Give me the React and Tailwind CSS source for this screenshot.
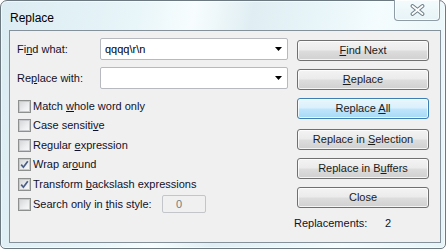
import React from 'react';

const btnBase =
  'h-[21px] w-[132px] flex items-center justify-center rounded-[3px] border text-[11px] leading-none text-[#1b1b1b] shadow-[inset_0_0_0_1px_rgba(255,255,255,0.75)]';
const btnGray =
  'border-[#707070] bg-[linear-gradient(180deg,#f3f3f3_0%,#ebebeb_48%,#dddddd_52%,#d0d0d0_100%)]';
const btnBlue =
  'border-[#3c7fb1] bg-[linear-gradient(180deg,#eaf6fd_0%,#d9f0fc_48%,#bee6fd_52%,#a7d9f5_100%)]';

function Check({ checked }) {
  return (
    <span className="w-[13px] h-[13px] shrink-0 border border-[#8e8f8f] bg-white flex items-center justify-center">
      <span className="w-[11px] h-[11px] border border-[#c8cacd] bg-[linear-gradient(135deg,#d6d8db_0%,#eceef0_60%,#f8f8f8_100%)] flex items-center justify-center">
        {checked && (
          <svg width="9" height="9" viewBox="0 0 9 9">
            <path d="M1.2 4.6 L3.4 7.2 L7.8 1.2" fill="none" stroke="#4a5e86" strokeWidth="1.7" />
          </svg>
        )}
      </span>
    </span>
  );
}

function Combo({ value }) {
  return (
    <div className="w-[188px] h-[22px] bg-white border border-[#b6bac0] rounded-[2px] flex items-center pl-[4px] pr-[5px]">
      <span className="flex-1 text-[11px] text-black">{value}</span>
      <svg width="7" height="4" viewBox="0 0 7 4">
        <path d="M0 0 H7 L3.5 4 Z" fill="#000" />
      </svg>
    </div>
  );
}

function Row({ h, checked, children }) {
  return (
    <div className={`${h} flex items-center gap-[2px] ml-[1px]`}>
      <Check checked={checked} />
      {children}
    </div>
  );
}

export default function App() {
  return (
    <div className="w-[448px] h-[249px] bg-white font-['Liberation_Sans',Arial,sans-serif] text-[11px] text-[#10102a]">
      <div className="w-[446px] h-[249px] flex flex-col border border-[#6d7980] rounded-t-[7px] rounded-b-[5px] bg-[linear-gradient(100deg,#dbecf2_0%,#e8f5f9_28%,#f7fdfe_40%,#e0eef3_52%,#e8f5f9_66%,#f4fcfe_78%,#e6f4f8_100%)] shadow-[inset_0_0_0_1px_rgba(255,255,255,0.6)]">
        {/* title bar */}
        <div className="h-[29px] flex items-start justify-between">
          <span className="pl-[9px] pt-[8px] text-[12px] text-black">Replace</span>
          <div className="mr-[5px] -mt-px w-[46px] h-[21px] border border-t-0 border-[#8e9ca5] rounded-b-[4px] bg-[linear-gradient(180deg,#f4fbfd_0%,#e6f3f7_100%)] flex items-center justify-center shadow-[inset_0_0_0_1px_rgba(255,255,255,0.7)]">
            <svg width="15" height="12" viewBox="0 0 15 12">
              <path d="M2.5 2 L12.5 10 M12.5 2 L2.5 10" stroke="#6f7f89" strokeWidth="3.8" strokeLinecap="round" />
              <path d="M2.5 2 L12.5 10 M12.5 2 L2.5 10" stroke="#ffffff" strokeWidth="1.8" strokeLinecap="round" />
            </svg>
          </div>
        </div>

        {/* client panel */}
        <div className="ml-[8px] w-[432px] h-[213px] border border-[#85919a] bg-[#f0f0f0] flex">
          {/* left column */}
          <div className="w-[278px] pl-[7px] pt-[7px] flex flex-col">
            <div className="flex items-center">
              <span className="w-[83px]">
                Fi<u>n</u>d what:
              </span>
              <Combo value={'qqqq\\r\\n'} />
            </div>
            <div className="flex items-center mt-[7px]">
              <span className="w-[83px]">
                Re<u>p</u>lace with:
              </span>
              <Combo value="" />
            </div>

            <div className="mt-[7px] flex flex-col">
              <Row h="h-[20px]">
                <span>
                  Match <u>w</u>hole word only
                </span>
              </Row>
              <Row h="h-[19px]">
                <span>
                  Case sensiti<u>v</u>e
                </span>
              </Row>
              <Row h="h-[20px]">
                <span>
                  Regular <u>e</u>xpression
                </span>
              </Row>
              <Row h="h-[19px]" checked>
                <span>
                  Wrap ar<u>o</u>und
                </span>
              </Row>
              <Row h="h-[20px]" checked>
                <span>
                  Transform <u>b</u>ackslash expressions
                </span>
              </Row>
              <Row h="h-[20px]">
                <span className="w-[127px]">
                  Search only in <u>t</u>his style:
                </span>
                <div className="w-[44px] h-[18px] border border-[#c2c5ca] rounded-[2px] bg-[#f0f0f0] flex items-center pl-[13px] text-[#7a7a7a]">
                  0
                </div>
              </Row>
            </div>
          </div>

          {/* right column */}
          <div className="pl-[9px] pt-[9px] flex flex-col">
            <div className={`${btnBase} ${btnGray}`}>
              <span>
                <u>F</u>ind Next
              </span>
            </div>
            <div className={`${btnBase} ${btnGray} mt-[8px]`}>
              <span>
                <u>R</u>eplace
              </span>
            </div>
            <div className={`${btnBase} ${btnBlue} mt-[8px]`}>
              <span>
                Replace <u>A</u>ll
              </span>
            </div>
            <div className={`${btnBase} ${btnGray} mt-[10px]`}>
              <span>
                Replace in <u>S</u>election
              </span>
            </div>
            <div className={`${btnBase} ${btnGray} mt-[8px]`}>
              <span>
                Replace in B<u>u</u>ffers
              </span>
            </div>
            <div className={`${btnBase} ${btnGray} mt-[8px]`}>
              <span>Close</span>
            </div>
            <div className="mt-[8px] flex items-center h-[14px] -ml-[3px]">
              <span className="w-[91px]">Replacements:</span>
              <span>2</span>
            </div>
          </div>
        </div>
      </div>
    </div>
  );
}
